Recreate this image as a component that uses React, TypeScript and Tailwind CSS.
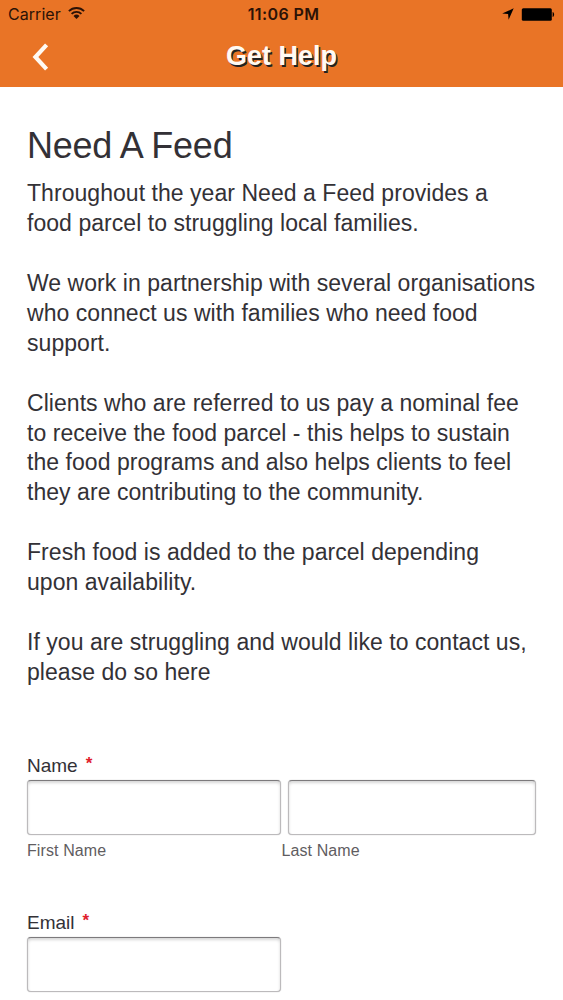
import type { ReactNode } from 'react';

// ─── Constants ────────────────────────────────────────────────────────────────
const PARAGRAPHS: string[][] = [
  ['Throughout the year Need a Feed provides a', 'food parcel to struggling local families.'],
  ['We work in partnership with several organisations', 'who connect us with families who need food', 'support.'],
  [
    'Clients who are referred to us pay a nominal fee',
    'to receive the food parcel - this helps to sustain',
    'the food programs and also helps clients to feel',
    'they are contributing to the community.',
  ],
  ['Fresh food is added to the parcel depending', 'upon availability.'],
  ['If you are struggling and would like to contact us,', 'please do so here'],
];

// ─── Status bar ───────────────────────────────────────────────────────────────
function StatusBar() {
  return (
    <div className="grid h-7 grid-cols-3 items-center px-2 text-base leading-7 text-[#2b1206]">
      <div className="flex items-center gap-[7px]">
        <span className="tracking-[0.05px]">Carrier</span>
        <svg width="17" height="12" viewBox="0 0 17 12" className="-mt-0.5" aria-hidden="true">
          <path d="M.9 4.1a10.8 10.8 0 0 1 15.2 0M3.6 6.9a7 7 0 0 1 9.8 0" fill="none" stroke="currentColor" strokeWidth="1.9" />
          <path d="M8.5 12 5.5 9a4.3 4.3 0 0 1 6 0z" fill="currentColor" />
        </svg>
      </div>
      <span className="pl-1 text-center font-semibold tracking-[0.4px] whitespace-nowrap">11:06 PM</span>
      <div className="flex items-center justify-end gap-[7px] text-black">
        <svg width="12" height="12" viewBox="0 0 12 12" aria-hidden="true">
          <path d="M11.7.3 6.6 11.7 6.1 6.1.2 5.5z" fill="currentColor" />
        </svg>
        <svg width="34" height="13" viewBox="0 0 34 13" aria-hidden="true">
          <rect x=".8" y=".2" width="30" height="12.6" rx="1.5" fill="currentColor" />
          <path d="M31.6 4v5c2-.5 2-4.5 0-5z" fill="currentColor" />
        </svg>
      </div>
    </div>
  );
}

// ─── Form fields ──────────────────────────────────────────────────────────────
function Label({ htmlFor, children }: { htmlFor: string; children: ReactNode }) {
  return (
    <label htmlFor={htmlFor} className="flex h-7 gap-2 text-[19px] leading-7 text-[#333136]">
      {children}
      <span className="-mt-0.5 text-[17px] font-bold text-[#e0202c]">*</span>
    </label>
  );
}

function TextInput({ id, label, className }: { id: string; label: string; className: string }) {
  return (
    <input
      id={id}
      type="text"
      aria-label={label}
      className={`block h-[55px] rounded-[4px] border-[1.5px] border-[#bcbabc] border-t-[#7c7a7c] bg-white px-3 text-xl shadow-[inset_0_2px_3px_rgba(0,0,0,0.16),0_0_1px_rgba(0,0,0,0.35)] outline-none ${className}`}
    />
  );
}

// ─── Page ─────────────────────────────────────────────────────────────────────
export default function App() {
  return (
    <div className="h-[1000px] w-[563px] overflow-hidden bg-white font-['Liberation_Sans',Arial,sans-serif] text-[#333136]">
      <header className="h-[87px] bg-[#e97426] font-[Inter,sans-serif]">
        <StatusBar />
        <div className="grid h-[58px] grid-cols-3 items-center">
          <button type="button" aria-label="Back" className="ml-8 w-5 text-[#fffaf3]">
            <svg width="18" height="28" viewBox="0 0 18 28">
              <path d="M14.6 1.8 3.4 14l11.2 12.2" fill="none" stroke="currentColor" strokeWidth="4.2" />
            </svg>
          </button>
          <h1 className="-mt-0.5 text-center font-['Liberation_Sans',Arial,sans-serif] text-[27px] font-bold whitespace-nowrap text-[#fffaf3] [text-shadow:1.5px_2px_0.5px_#222]">
            Get Help
          </h1>
        </div>
      </header>

      <main className="px-[27px] pt-[36px]">
        <h2 className="text-[36px] leading-[46px] tracking-[-0.25px]">Need A Feed</h2>
        <div className="mt-[10.3px] flex flex-col gap-[29.9px] text-[23px] leading-[29.9px] tracking-[0.045px]">
          {PARAGRAPHS.map((lines) => (
            <p key={lines[0]}>
              {lines.map((line) => (
                <span key={line} className="block whitespace-nowrap">{line}</span>
              ))}
            </p>
          ))}
        </div>

        <form className="mt-[64px]">
          <Label htmlFor="first">Name</Label>
          <div className="flex gap-[7px]">
            <TextInput id="first" label="First Name" className="w-[254px]" />
            <TextInput id="last" label="Last Name" className="w-[248px]" />
          </div>
          <div className="mt-0.5 flex text-base leading-7 tracking-[0.1px] text-[#5f5d61]">
            <span className="w-[254.5px]">First Name</span>
            <span>Last Name</span>
          </div>

          <div className="mt-11">
            <Label htmlFor="email">Email</Label>
            <TextInput id="email" label="Email" className="w-[254px]" />
          </div>
        </form>
      </main>
    </div>
  );
}
